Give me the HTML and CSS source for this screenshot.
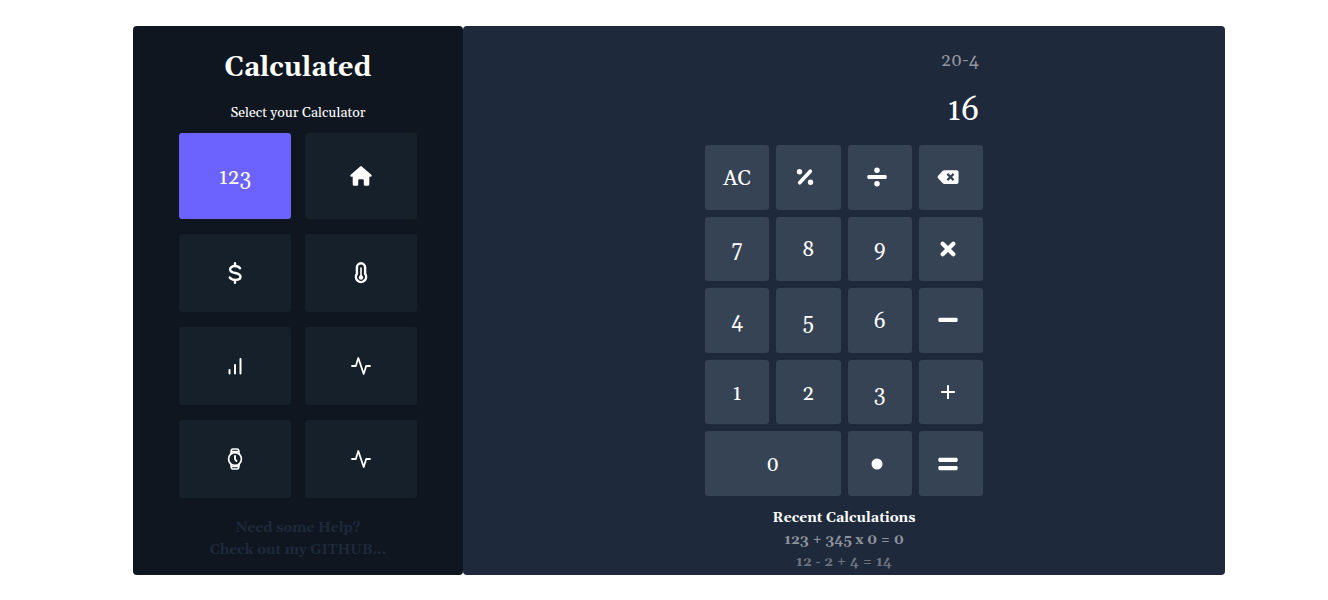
FILE: index.html
```html
<!DOCTYPE html>
<html lang="en">
<head>
<meta charset="utf-8">
<title>Calculated</title>
<link rel="stylesheet" href="styles.css">
</head>
<body>
<div class="app">
  <aside class="sidebar">
    <h1 class="title">Calculated</h1>
    <p class="subtitle">Select your Calculator</p>
    <nav class="modes" aria-label="Calculators">
      <button class="mode mode-active" type="button">123</button>
      <button class="mode mode-icon" type="button" aria-label="Home"><svg class="icon" viewBox="0 0 24 24"><path fill="currentColor" d="M11.200 2.400a1.200 1.200 0 0 1 1.600 0l9.500 8.400c.9.800.4 2-.7 2h-1.300v7.400a1.500 1.500 0 0 1-1.500 1.500h-2.800a1.200 1.200 0 0 1-1.200-1.200v-4a1.300 1.300 0 0 0-1.300-1.300h-3a1.300 1.300 0 0 0-1.300 1.300v4A1.200 1.200 0 0 1 8 21.700H5.200a1.500 1.500 0 0 1-1.500-1.500v-7.400H2.400c-1.100 0-1.600-1.200-.7-2z"/></svg></button>
      <button class="mode mode-icon" type="button" aria-label="Currency"><svg class="icon" viewBox="0 0 24 24" fill="none" stroke="currentColor" stroke-width="2.400" stroke-linecap="round"><path d="M12 2.200v2.500M12 19.300v2.500M17 7.200C15.800 5.500 14 5 12 5 9.200 5 7.100 6.300 7.100 8.400c0 4.900 10.400 2.200 10.400 7.200 0 2.100-2.200 3.400-5.200 3.400-2.400 0-4.500-.9-5.600-2.600"/></svg></button>
      <button class="mode mode-icon" type="button" aria-label="Temperature"><svg class="icon" viewBox="0 0 24 24" fill="none" stroke="currentColor"><path stroke-width="2.400" d="M7.900 6.400a4.100 4.100 0 0 1 8.200 0v6.400a5.100 5.100 0 1 1-8.200 0z"/><path stroke-width="1.600" stroke-linecap="round" d="M12 7v9"/><circle cx="12" cy="16.500" r="2.200" fill="currentColor" stroke="none"/></svg></button>
      <button class="mode mode-icon" type="button" aria-label="Statistics"><svg class="icon" viewBox="0 0 24 24" fill="none" stroke="currentColor" stroke-width="2" stroke-linecap="round"><path d="M6.500 16v3.500M12 11v8.500M17.500 5v14.500"/></svg></button>
      <button class="mode mode-icon" type="button" aria-label="Activity"><svg class="icon" viewBox="0 0 24 24" fill="none" stroke="currentColor" stroke-width="1.800" stroke-linecap="round" stroke-linejoin="round"><path d="M3 12h3.800L9.300 4l5.400 16 2.500-8H21"/></svg></button>
      <button class="mode mode-icon" type="button" aria-label="Time"><svg class="icon" viewBox="0 0 24 24" fill="none" stroke="currentColor" stroke-width="1.700" stroke-linecap="round" stroke-linejoin="round"><circle cx="12" cy="12" r="6.400"/><path d="M7.900 6.500l.4-3.100q.2-1.400 1.600-1.400h4.200q1.400 0 1.600 1.400l.4 3.100M7.900 17.500l.4 3.100q.2 1.400 1.600 1.400h4.200q1.400 0 1.600-1.400l.4-3.100M9 4.500h6M9 19.500h6"/><path stroke-width="2" d="M12 9v3l1.400 2"/></svg></button>
      <button class="mode mode-icon" type="button" aria-label="Health"><svg class="icon" viewBox="0 0 24 24" fill="none" stroke="currentColor" stroke-width="1.800" stroke-linecap="round" stroke-linejoin="round"><path d="M3 12h3.800L9.300 4l5.400 16 2.500-8H21"/></svg></button>
    </nav>
    <p class="help">Need some Help?<br>Check out my GITHUB...</p>
  </aside>
  <main class="calculator">
    <div class="display">
      <div class="expression">20-4</div>
      <div class="result">16</div>
    </div>
    <div class="keypad">
      <button class="key" type="button">AC</button>
      <button class="key key-icon" type="button" aria-label="Percent"><svg class="icon" viewBox="0 0 24 24"><path fill="none" stroke="currentColor" stroke-width="4" stroke-linecap="round" d="M6.200 18.200 17.800 5.800"/><circle fill="currentColor" cx="6" cy="6.300" r="2.900"/><circle fill="currentColor" cx="18" cy="17.700" r="2.900"/></svg></button>
      <button class="key key-icon" type="button" aria-label="Divide"><svg class="icon" viewBox="0 0 24 24" fill="currentColor"><rect x="1.500" y="9.800" width="21" height="4.400" rx="1.500"/><circle cx="12" cy="4.600" r="3"/><circle cx="12" cy="19.400" r="3"/></svg></button>
      <button class="key key-icon" type="button" aria-label="Backspace"><svg class="icon" viewBox="0 0 24 24"><path fill="currentColor" d="M8 4.500h13.500Q23.500 4.500 23.500 6.500v11q0 2-2 2H8q-1 0-1.700-.8L1 13q-.8-1 0-2l5.300-5.700Q7 4.500 8 4.500z"/><path class="cutout" d="M11.300 8.600l6.800 6.800M18.100 8.600l-6.800 6.800"/></svg></button>
      <button class="key" type="button">7</button>
      <button class="key" type="button">8</button>
      <button class="key" type="button">9</button>
      <button class="key key-icon" type="button" aria-label="Multiply"><svg class="icon" viewBox="0 0 24 24" fill="none" stroke="currentColor" stroke-width="4.600" stroke-linecap="round"><path d="M6.200 6.200l11.600 11.600M17.800 6.200 6.200 17.800"/></svg></button>
      <button class="key" type="button">4</button>
      <button class="key" type="button">5</button>
      <button class="key" type="button">6</button>
      <button class="key key-icon" type="button" aria-label="Subtract"><svg class="icon" viewBox="0 0 24 24" fill="currentColor"><rect x="1.500" y="9.600" width="21" height="4.600" rx="1.500"/></svg></button>
      <button class="key" type="button">1</button>
      <button class="key" type="button">2</button>
      <button class="key" type="button">3</button>
      <button class="key key-icon" type="button" aria-label="Add"><svg class="icon" viewBox="0 0 24 24" fill="none" stroke="currentColor" stroke-width="2.200"><path d="M12 4.500v15M4.500 12h15"/></svg></button>
      <button class="key key-wide" type="button">0</button>
      <button class="key key-icon" type="button" aria-label="Decimal point"><svg class="icon" viewBox="0 0 24 24"><circle fill="currentColor" cx="12" cy="12" r="6"/></svg></button>
      <button class="key key-icon" type="button" aria-label="Equals"><svg class="icon" viewBox="0 0 24 24" fill="currentColor"><rect x="1.500" y="5.200" width="21" height="4.600" rx="1.500"/><rect x="1.500" y="14.200" width="21" height="4.600" rx="1.500"/></svg></button>
    </div>
    <section class="recent">
      <h2 class="recent-title">Recent Calculations</h2>
      <p class="recent-item">123 + 345 x 0 = 0</p>
      <p class="recent-item recent-older">12 - 2 + 4 = 14</p>
    </section>
  </main>
</div>
</body>
</html>
```

FILE: styles.css
```css
* { box-sizing: border-box; }

body {
  margin: 0;
  padding: 26px 103px 25px 133px;
  background: #fff;
  color: #fff;
  font-family: Georgia, Gelasio, "Liberation Serif", serif;
}

h1, h2, p { margin: 0; }

.app {
  display: grid;
  grid-template-columns: 330px minmax(0, 1fr);
}

.sidebar,
.calculator {
  border-radius: 4px;
  display: flex;
  flex-direction: column;
  align-items: center;
}

.sidebar {
  background: #0f1620;
  padding: 22px 46px 14px;
  text-align: center;
}

.title {
  font-size: 27px;
  line-height: 40px;
}

.subtitle {
  margin-top: 15px;
  font-size: 14px;
  line-height: 20px;
}

.modes {
  align-self: stretch;
  margin-top: 10px;
  display: grid;
  grid-template-columns: 1fr 1fr;
  grid-template-rows: 86px;
  grid-auto-rows: 78px;
  gap: 15px 14px;
}

.mode,
.key {
  display: flex;
  align-items: center;
  justify-content: center;
  padding: 3px 0 0;
  border: 0;
  border-radius: 3px;
  color: #fff;
  font-family: inherit;
  font-size: 21px;
  line-height: 24px;
  cursor: pointer;
}

.mode { background: #16202a; }

.mode-active { background: #6c63ff; }

.icon {
  width: 22px;
  height: 22px;
}

.mode-icon { padding: 0; }

.mode-icon .icon {
  width: 24px;
  height: 24px;
}

.help {
  margin-top: 19px;
  color: #1e293b;
  font-size: 14px;
  font-weight: bold;
  line-height: 22px;
}

.calculator {
  background: #1e293b;
  padding: 21px 16px 2px;
}

.display,
.keypad { width: 278px; }

.display {
  padding-right: 4px;
  text-align: right;
}

.expression {
  color: #94979f;
  font-size: 18px;
  line-height: 28px;
}

.result {
  margin-top: 16px;
  font-size: 32px;
  line-height: 40px;
}

.keypad {
  height: 351px;
  margin-top: 14px;
  display: grid;
  grid-template-columns: repeat(4, 1fr);
  grid-template-rows: repeat(5, 1fr);
  gap: 7px;
}

.key { background: #364354; }

.key-icon { padding: 0 6px 0 0; }

.key-wide { grid-column: span 2; }

.cutout {
  fill: none;
  stroke: #364354;
  stroke-width: 2.4px;
}

.recent {
  margin-top: 11px;
  font-size: 14px;
  font-weight: bold;
  line-height: 22px;
  text-align: center;
}

.recent-title {
  font-size: 14px;
  line-height: 22px;
}

.recent-item { color: #8e949d; }

.recent-older { color: #6d7480; }
```
